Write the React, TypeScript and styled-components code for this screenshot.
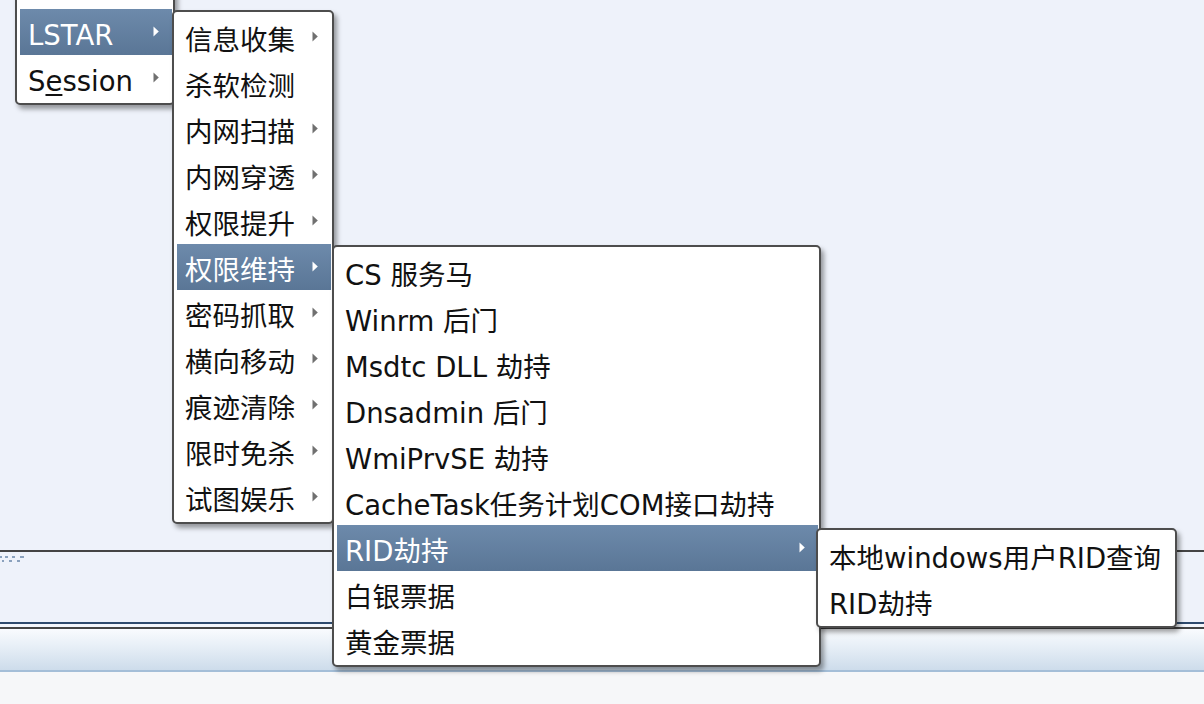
import React from "react";
import styled, { createGlobalStyle } from "styled-components";

const Global = createGlobalStyle`
  html, body { margin: 0; padding: 0; }
  body { width: 1204px; height: 704px; overflow: hidden; background: #f6f7f9; }
  #root { width: 1204px; height: 704px; }
`;

const Page = styled.div`
  position: relative;
  width: 1204px;
  height: 704px;
  display: flex;
  flex-direction: column;
  overflow: hidden;
  font-family: "DejaVu Sans", "Noto Sans CJK SC", sans-serif;
`;

const TopArea = styled.div`
  height: 550px;
  background: #eef2fa;
`;

const Rule = styled.div<{ $h: number; $c: string }>`
  height: ${(p) => p.$h}px;
  background: ${(p) => p.$c};
  flex: none;
`;

const Pane = styled.div`
  height: 70px;
  background: #eef2fa;
  padding-top: 4px;
  box-sizing: border-box;
`;

const Toolbar = styled.div`
  height: 41px;
  background: linear-gradient(#f9fbfe, #e6eef6 45%, #cddceb);
`;

const Footer = styled.div`
  flex: 1;
  background: #f6f7f9;
`;

const Menu = styled.div<{ $x: number; $y: number; $w: number }>`
  position: absolute;
  left: ${(p) => p.$x}px;
  top: ${(p) => p.$y}px;
  width: ${(p) => p.$w}px;
  box-sizing: border-box;
  background: #fff;
  border: 2px solid #4d4d4d;
  border-radius: 5px;
  padding: 2px 1px 2px 3px;
  display: flex;
  flex-direction: column;
  box-shadow: 3px 4px 5px rgba(0, 0, 0, 0.38);
`;

const Item = styled.div<{ $active?: boolean }>`
  height: 46px;
  display: flex;
  align-items: center;
  padding: 0 13px 0 8px;
  font-size: 27.5px;
  line-height: 40px;
  white-space: nowrap;
  color: ${(p) => (p.$active ? "#ffffff" : "#111111")};
  background: ${(p) =>
    p.$active ? "linear-gradient(#6d8aab, #5a7696)" : "transparent"};
`;

const Label = styled.span`
  flex: 1;
  padding-top: 5px;
`;

const Mnemonic = styled.span`
  text-decoration: underline;
  text-underline-offset: 3px;
  text-decoration-thickness: 2px;
`;

const Arrow = ({ active }: { active?: boolean }) => (
  <svg width="6" height="11" viewBox="0 0 6 11" style={{ flex: "none", marginTop: -1 }}>
    <path d="M0.5 0.5 L5.8 5.5 L0.5 10.5 Z" fill={active ? "#ffffff" : "#707070"} />
  </svg>
);

const Grip = () => (
  <svg width="26" height="8" viewBox="0 0 26 8" style={{ display: "block" }}>
    <g fill="#8aa1bd">
      <rect x="0" y="0" width="2" height="2" />
      <rect x="5" y="0" width="3" height="2" />
      <rect x="12" y="0" width="3" height="2" />
      <rect x="20" y="0" width="4" height="2" />
      <rect x="2" y="4" width="2" height="2" />
      <rect x="9" y="4" width="3" height="2" />
      <rect x="17" y="4" width="3" height="2" />
    </g>
  </svg>
);

type Entry = { label: React.ReactNode; sub?: boolean; active?: boolean };

const MenuItem = ({ label, sub, active }: Entry) => (
  <Item $active={active}>
    <Label>{label}</Label>
    {sub && <Arrow active={active} />}
  </Item>
);

const menu2: Entry[] = [
  { label: "信息收集", sub: true },
  { label: "杀软检测" },
  { label: "内网扫描", sub: true },
  { label: "内网穿透", sub: true },
  { label: "权限提升", sub: true },
  { label: "权限维持", sub: true, active: true },
  { label: "密码抓取", sub: true },
  { label: "横向移动", sub: true },
  { label: "痕迹清除", sub: true },
  { label: "限时免杀", sub: true },
  { label: "试图娱乐", sub: true },
];

const menu3: Entry[] = [
  { label: "CS 服务马" },
  { label: "Winrm 后门" },
  { label: "Msdtc DLL 劫持" },
  { label: "Dnsadmin 后门" },
  { label: "WmiPrvSE 劫持" },
  { label: "CacheTask任务计划COM接口劫持" },
  { label: "RID劫持", sub: true, active: true },
  { label: "白银票据" },
  { label: "黄金票据" },
];

const menu4: Entry[] = [{ label: "本地windows用户RID查询" }, { label: "RID劫持" }];

export default function App() {
  return (
    <Page>
      <Global />
      <TopArea />
      <Rule $h={2} $c="#444444" />
      <Pane>
        <Grip />
      </Pane>
      <Rule $h={2} $c="#2e4a6d" />
      <Rule $h={3} $c="#f3f6fb" />
      <Rule $h={2} $c="#444444" />
      <Toolbar />
      <Rule $h={2} $c="#a4bed8" />
      <Footer />

      <Menu $x={15} $y={-41} $w={160}>
        <Item />
        <MenuItem label="LSTAR" sub active />
        <MenuItem
          label={
            <>
              S<Mnemonic>e</Mnemonic>ssion
            </>
          }
          sub
        />
      </Menu>

      <Menu $x={172} $y={10} $w={162}>
        {menu2.map((e, i) => (
          <MenuItem key={i} {...e} />
        ))}
      </Menu>

      <Menu $x={332} $y={245} $w={489}>
        {menu3.map((e, i) => (
          <MenuItem key={i} {...e} />
        ))}
      </Menu>

      <Menu $x={816} $y={528} $w={361}>
        {menu4.map((e, i) => (
          <MenuItem key={i} {...e} />
        ))}
      </Menu>
    </Page>
  );
}
